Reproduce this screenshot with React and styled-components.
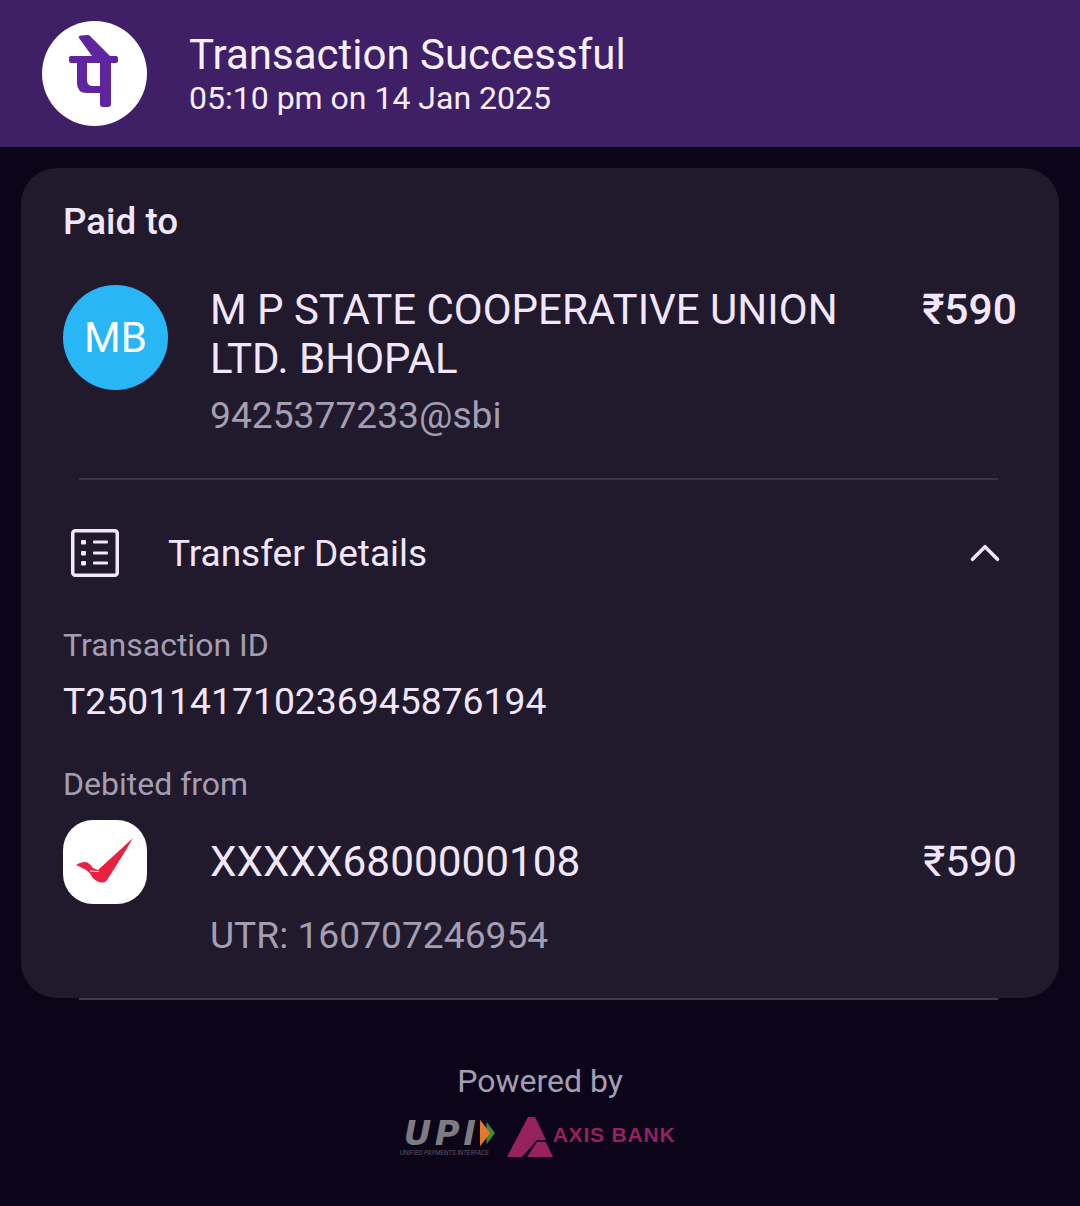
import React from "react";
import styled, { createGlobalStyle } from "styled-components";
import { ChevronUp } from "lucide-react";

const GlobalStyle = createGlobalStyle`
  html, body {
    margin: 0;
    padding: 0;
    background: #0c051a;
  }
  * {
    box-sizing: border-box;
  }
`;

const Page = styled.div`
  width: 1080px;
  height: 1206px;
  overflow: hidden;
  background: #0c051a;
  font-family: Roboto, "Liberation Sans", sans-serif;
  color: #f1e6fb;
`;

const Header = styled.header`
  height: 147px;
  padding: 0 42px;
  background: #3f1f66;
  display: flex;
  align-items: center;
  gap: 42px;
`;

const LogoCircle = styled.div`
  width: 105px;
  height: 105px;
  border-radius: 50%;
  background: #fff;
  display: flex;
  align-items: center;
  justify-content: center;
  flex: none;
`;

const HeaderText = styled.div`
  display: flex;
  flex-direction: column;
  margin-top: 3px;
`;

const Title = styled.div`
  font-size: 42px;
  line-height: 50px;
  color: #f6effc;
  margin-top: -3px;
`;

const Subtitle = styled.div`
  font-size: 32px;
  line-height: 38px;
  margin-top: -1px;
  color: #f6effc;
`;

const Card = styled.section`
  margin: 21px 21px 0;
  height: 830px;
  background: #211a2c;
  border-radius: 36px;
  padding: 31px 42px 0;
  position: relative;
`;

const SectionLabel = styled.div`
  font-size: 36.8px;
  line-height: 46px;
  font-weight: 500;
`;

const PayeeRow = styled.div`
  display: flex;
  margin-top: 40px;
`;

const Avatar = styled.div`
  width: 105px;
  height: 105px;
  border-radius: 50%;
  background: #29b6f6;
  color: #fff;
  font-size: 42px;
  display: flex;
  align-items: center;
  justify-content: center;
  flex: none;
`;

const PayeeInfo = styled.div`
  flex: 1;
  margin-left: 42px;
`;

const PayeeName = styled.div`
  font-size: 42px;
  line-height: 49px;
  width: 660px;
`;

const Muted = styled.div`
  font-size: 37.2px;
  line-height: 44px;
  color: #a59eb2;
  margin-top: ${(p) => p.$top || 0}px;
`;

const Amount = styled.div`
  font-size: 42.6px;
  line-height: 49px;
  font-weight: ${(p) => p.$weight || 400};
  margin-top: ${(p) => p.$top || 0}px;
`;

const Divider = styled.hr`
  border: 0;
  height: 2px;
  background: #3a3346;
  margin: 41px 19px 0 16px;
`;

const DetailsRow = styled.div`
  display: flex;
  align-items: center;
  height: 144px;
  margin-top: 1px;
  padding: 0 7px 0 8px;
  font-size: 37px;
`;

const DetailsTitle = styled.div`
  flex: 1;
  margin-left: 49px;
`;

const Label = styled.div`
  font-size: 32px;
  line-height: 40px;
  color: #a59eb2;
`;

const TransactionId = styled.div`
  font-size: 37.3px;
  line-height: 44px;
  margin-top: 14px;
`;

const DebitLabel = styled(Label)`
  margin-top: 41px;
`;

const BankRow = styled.div`
  display: flex;
  margin-top: 16px;
`;

const BankTile = styled.div`
  width: 84px;
  height: 84px;
  border-radius: 30px;
  background: #fff;
  flex: none;
`;

const BankInfo = styled.div`
  flex: 1;
  margin-left: 63px;
  margin-top: 17px;
`;

const Account = styled.div`
  font-size: 42.3px;
  line-height: 50px;
`;

const BottomRule = styled.div`
  position: absolute;
  left: 58px;
  right: 61px;
  bottom: -2px;
  height: 2px;
  background: #3f3a49;
`;

const Footer = styled.footer`
  margin-top: 63px;
  display: flex;
  flex-direction: column;
  align-items: center;
`;

const PoweredBy = styled.div`
  font-size: 32px;
  line-height: 40px;
  color: #a59eb2;
`;

const Brands = styled.div`
  margin-top: 16px;
  display: flex;
  align-items: flex-start;
  gap: 13px;
  margin-right: 5px;
`;

const UpiMark = styled.div`
  display: flex;
  flex-direction: column;
  align-items: flex-start;
  width: 94px;
  padding-top: 2px;
`;

const UpiTop = styled.div`
  display: flex;
  align-items: center;
  height: 28px;
  padding-left: 4px;
`;

const UpiWord = styled.span`
  font-family: "DejaVu Sans", sans-serif;
  font-style: italic;
  font-weight: 700;
  font-size: 34px;
  line-height: 28px;
  letter-spacing: 3.5px;
  color: #7d7a82;
`;

const UpiSmall = styled.span`
  font-size: 6.4px;
  line-height: 8px;
  margin-top: 2px;
  font-style: italic;
  color: #5b5863;
  white-space: nowrap;
`;

const Axis = styled.div`
  display: flex;
  align-items: flex-start;
`;

const AxisWord = styled.span`
  font-family: "Liberation Sans", sans-serif;
  font-size: 21px;
  line-height: 24px;
  font-weight: 700;
  letter-spacing: 0.8px;
  color: #97215c;
  margin-top: 6px;
  white-space: nowrap;
`;

const PhonePeGlyph = () => (
  <svg width="105" height="105" viewBox="42 21 105 105">
    <path
      d="M79 38Q78 36 81 35.5L88 35Q90 35 91 37L110 56H116Q118 56 118 59V61Q118 63 116 63H111V104Q111 107 108 107H103Q100 107 100 104V93H87Q77 93 77 83V63H71Q69 63 69 60V58Q69 56 71 56H92ZM87 63V80Q87 86 93 86H100V63Z"
      fill="#5f259f"
      fillRule="evenodd"
    />
  </svg>
);

const ListIcon = () => (
  <svg width="48" height="48" viewBox="0 0 48 48" fill="none">
    <rect x="1.75" y="1.75" width="44.5" height="44.5" rx="2.5" stroke="#f1e6fb" strokeWidth="3.5" />
    <g fill="#f1e6fb">
      <rect x="10" y="11" width="5" height="4.5" rx="1" />
      <rect x="10" y="22" width="5" height="4.5" rx="1" />
      <rect x="10" y="32" width="5" height="4.5" rx="1" />
      <rect x="22" y="11.5" width="15" height="3" rx="1" />
      <rect x="22" y="22.5" width="15" height="3" rx="1" />
      <rect x="22" y="32.5" width="15" height="3" rx="1" />
    </g>
  </svg>
);

const BankCheck = () => (
  <svg width="84" height="84" viewBox="63 820 84 84">
    <path
      d="M76 865C79 863 82 862 85 862C88 862 91 865 93 868L98 870L133 838C125 852 116 866 107 880C105 883 102 883 99 882C96 881 94 879 92 877C90 873 88 871 86 870C83 868 80 867 76 865Z"
      fill="#e8213f"
    />
    <path d="M90 871L99 871.5" stroke="#fff" strokeWidth="1" fill="none" />
  </svg>
);

const UpiChevrons = () => (
  <svg width="16" height="28" viewBox="0 0 17 28">
    <path d="M8 2l9 12-9 12Z" fill="#3a8a3f" />
    <path d="M1 0l11 14L1 28Z" fill="#e9772a" />
  </svg>
);

const AxisLogo = () => (
  <svg width="46" height="40" viewBox="507 1118 46 40">
    <path d="M507 1158L528 1118H535L546 1141H537L522 1158Z" fill="#97215c" />
    <path d="M537 1143H546L553 1158H527Z" fill="#97215c" />
  </svg>
);

export default function App() {
  return (
    <Page>
      <GlobalStyle />
      <Header>
        <LogoCircle>
          <PhonePeGlyph />
        </LogoCircle>
        <HeaderText>
          <Title>Transaction Successful</Title>
          <Subtitle>05:10 pm on 14 Jan 2025</Subtitle>
        </HeaderText>
      </Header>
      <Card>
        <SectionLabel>Paid to</SectionLabel>
        <PayeeRow>
          <Avatar>MB</Avatar>
          <PayeeInfo>
            <PayeeName>M P STATE COOPERATIVE UNION LTD. BHOPAL</PayeeName>
            <Muted $top={10}>9425377233@sbi</Muted>
          </PayeeInfo>
          <Amount $weight={500}>₹590</Amount>
        </PayeeRow>
        <Divider />
        <DetailsRow>
          <ListIcon />
          <DetailsTitle>Transfer Details</DetailsTitle>
          <ChevronUp size={50} strokeWidth={1.7} color="#f1e6fb" />
        </DetailsRow>
        <Label>Transaction ID</Label>
        <TransactionId>T2501141710236945876194</TransactionId>
        <DebitLabel>Debited from</DebitLabel>
        <BankRow>
          <BankTile>
            <BankCheck />
          </BankTile>
          <BankInfo>
            <Account>XXXXX6800000108</Account>
            <Muted $top={26}>UTR: 160707246954</Muted>
          </BankInfo>
          <Amount $top={17}>₹590</Amount>
        </BankRow>
        <BottomRule />
      </Card>
      <Footer>
        <PoweredBy>Powered by</PoweredBy>
        <Brands>
          <UpiMark>
            <UpiTop>
              <UpiWord>UPI</UpiWord>
              <UpiChevrons />
            </UpiTop>
            <UpiSmall>UNIFIED PAYMENTS INTERFACE</UpiSmall>
          </UpiMark>
          <Axis>
            <AxisLogo />
            <AxisWord>AXIS BANK</AxisWord>
          </Axis>
        </Brands>
      </Footer>
    </Page>
  );
}
